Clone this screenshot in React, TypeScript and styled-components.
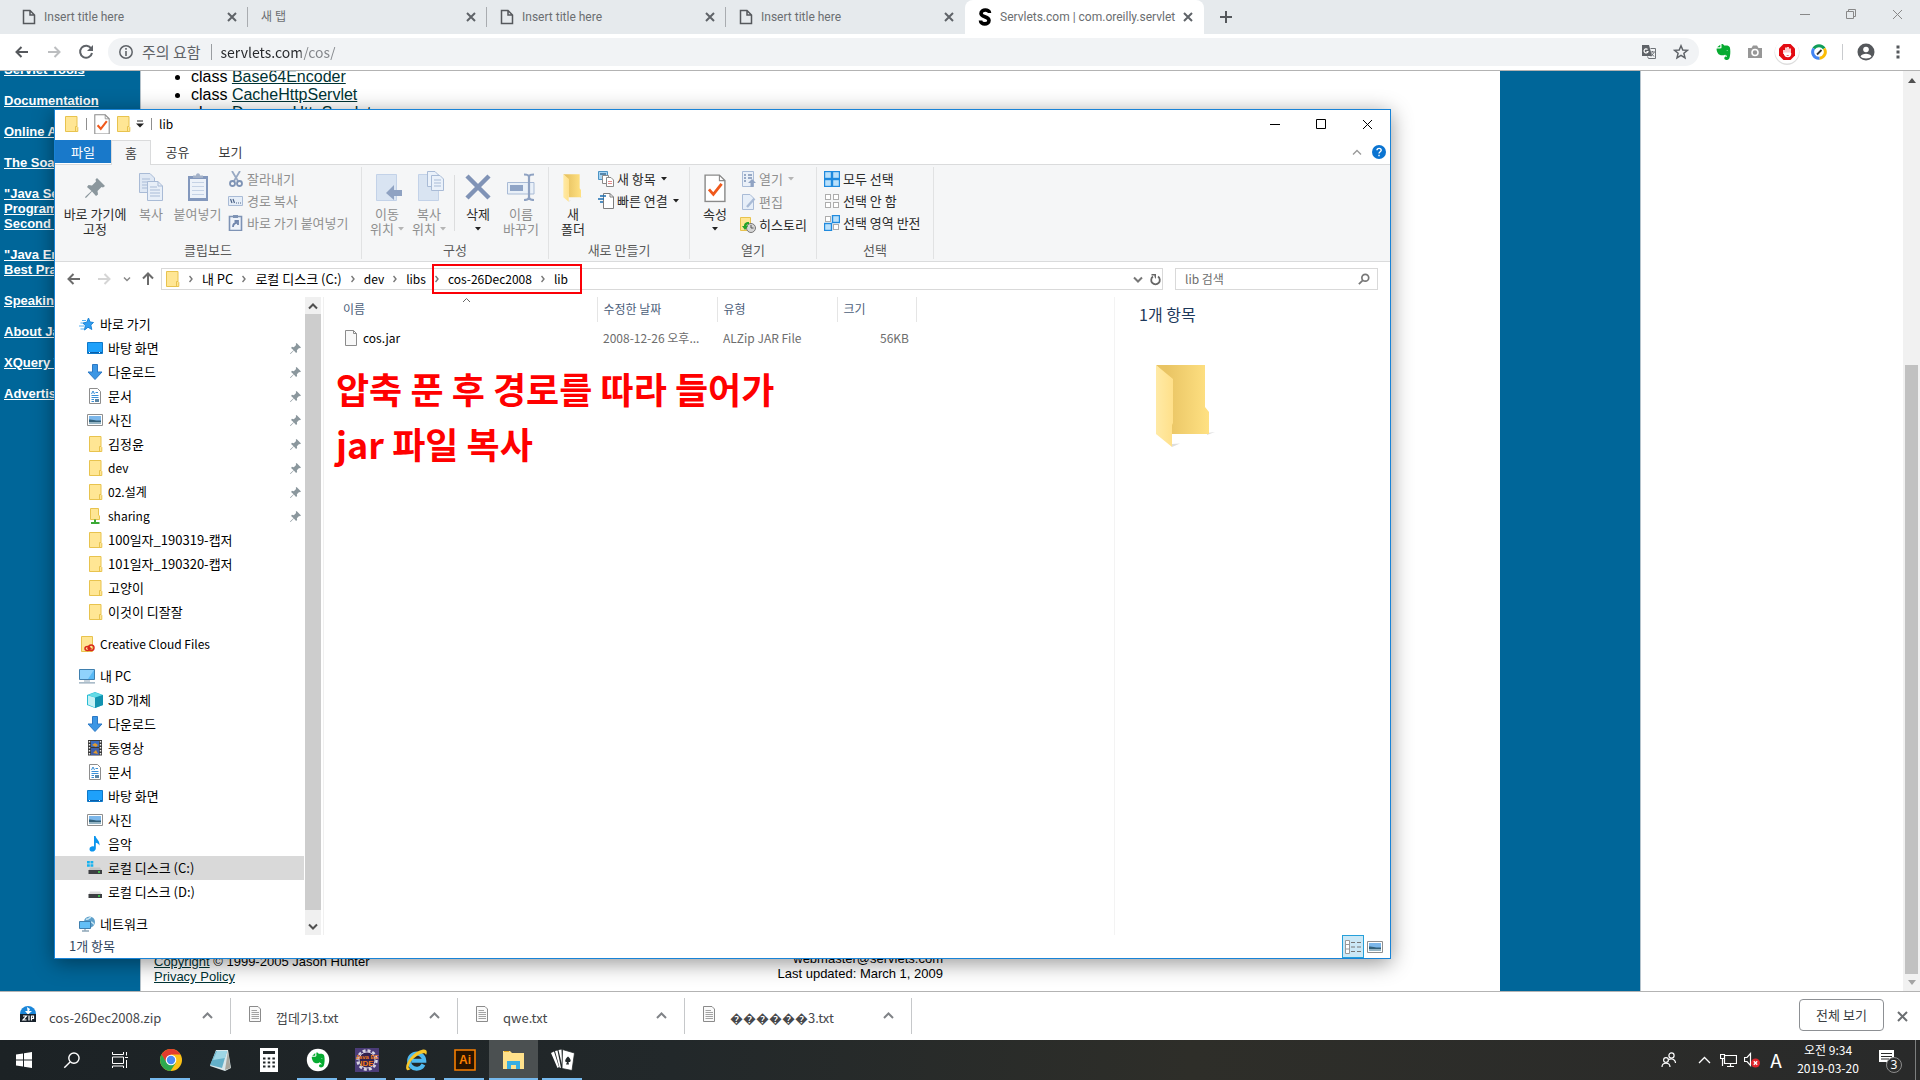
import React from 'react';
import styled, { createGlobalStyle, css } from 'styled-components';

const GlobalStyle = createGlobalStyle`
  *, *::before, *::after { box-sizing: border-box; }
  html, body, #root { height: 100%; }
  body {
    margin: 0;
    overflow: hidden;
    background: #fff;
    font-family: "Noto Sans CJK KR", "Noto Sans", sans-serif;
    font-size: 12px;
    line-height: 16px;
    color: #000;
  }
  button, input { font: inherit; color: inherit; padding: 0; border: 0; background: none; margin: 0; }
  button { cursor: default; }
  ul { list-style: none; margin: 0; padding: 0; }
  p { margin: 0; }
  svg { display: block; flex: none; }
`;

const Screen = styled.div`
  display: flex;
  flex-direction: column;
  height: 100vh;
`;

/* ---------- Browser chrome ---------- */

const TabStrip = styled.header`
  display: flex;
  height: 34px;
  background: #e6eaed;
`;
const TabItem = styled.div<{ $active?: boolean; $first?: boolean; $last?: boolean }>`
  position: relative;
  display: flex;
  align-items: center;
  gap: 8px;
  width: ${p => (p.$first ? 248 : 239)}px;
  padding: 0 11px 0 ${p => (p.$first ? 22 : 13)}px;
  color: #6b6e71;
  ${p => !p.$active && !p.$last && css`
    &::after {
      content: '';
      position: absolute;
      right: 0;
      top: 7px;
      width: 1px;
      height: 20px;
      background: #a9acb0;
    }
  `}
  ${p => p.$active && css`
    background: #fff;
    border-radius: 8px 8px 0 0;
  `}
`;
const TabTitle = styled.span`
  flex: 1;
  margin-right: -6px;
  overflow: hidden;
  font-family: Roboto, "Noto Sans CJK KR", sans-serif;
  white-space: nowrap;
`;
const PlainButton = styled.button`
  display: flex;
  align-items: center;
  justify-content: center;
`;
const NewTab = styled(PlainButton)`
  width: 28px;
  margin-left: 8px;
`;
const WindowControls = styled.div`
  display: flex;
  margin-left: auto;
  height: 28px;
  button { width: 46px; }
`;

const Toolbar = styled.div`
  display: flex;
  align-items: center;
  height: 37px;
  padding: 0 6px;
  border-bottom: 1px solid #b3b3b3;
`;
const ToolButton = styled(PlainButton)`
  width: 32px;
  height: 28px;
`;
const Omnibox = styled.div`
  display: flex;
  flex: 1;
  align-items: center;
  height: 28px;
  margin: 0 8px 0 6px;
  padding: 0 2px 0 10px;
  border-radius: 14px;
  background: #f1f3f5;
  color: #5f6368;
  font-size: 14px;
`;
const Warning = styled.span`
  margin: 0 9px 0 8px;
  padding-right: 10px;
  border-right: 1px solid #9a9da1;
  font-size: 15px;
`;
const Url = styled.input`
  flex: 1;
  outline: 0;
  color: #26282b;
  -webkit-text-fill-color: transparent;
  background: linear-gradient(90deg, #26282b 80px, #808387 80px);
  background-clip: text;
  -webkit-background-clip: text;
`;
const ToolDivider = styled.span`
  width: 1px;
  height: 16px;
  margin: 0 7px;
  background: #c9cbce;
`;

/* ---------- Web page ---------- */

const Page = styled.main`
  display: flex;
  flex: 1;
  min-height: 0;
  overflow: hidden;
  font-family: "Liberation Sans", Arial, sans-serif;
`;
const SiteNav = styled.nav`
  width: 141px;
  overflow: hidden;
  padding-left: 4px;
  border-right: 1px solid #b5c3cc;
  background: #006699;
  font-size: 13px;
  font-weight: bold;
  line-height: 15px;
  ul { display: grid; gap: 16px; margin-top: -9px; }
  a { color: #fff; }
`;
const Article = styled.div`
  display: flex;
  flex: 1;
  flex-direction: column;
  justify-content: space-between;
  overflow: hidden;
  a { color: #003333; }
`;
const ClassList = styled.ul`
  margin: -3px 0 0;
  padding-left: 50px;
  list-style: disc;
  font-size: 16px;
  line-height: 18px;
`;
const SiteFooter = styled.footer`
  display: flex;
  align-items: flex-end;
  justify-content: space-between;
  width: 802px;
  padding: 0 0 7px 13px;
  font-size: 13px;
  line-height: 15px;
`;
const FooterRight = styled.p`
  padding-bottom: 3px;
  text-align: right;
`;
const RightBand = styled.div`
  width: 141px;
  border-right: 1px solid #b5c3cc;
  background: #006699;
`;
const RightBlank = styled.div`
  width: 262px;
`;
const PageScroll = styled.div`
  display: flex;
  flex-direction: column;
  align-items: center;
  justify-content: space-between;
  width: 17px;
  padding: 7px 0 6px;
  background: #f1f1f1;
`;
const PageThumb = styled.div`
  flex: 1;
  width: 13px;
  margin: 282px 0 6px;
  background: #c1c1c1;
`;

/* ---------- Downloads ---------- */

const DownloadBar = styled.section`
  display: flex;
  align-items: center;
  height: 49px;
  padding: 0 12px 0 4px;
  border-top: 1px solid #b3b3b3;
  background: #fff;
  font-size: 13px;
  color: #46484b;
`;
const Download = styled.div`
  display: flex;
  align-items: center;
  gap: 13px;
  width: 227px;
  height: 36px;
  padding: 0 17px 0 16px;
  border-right: 1px solid #c6c8ca;
  & > svg { margin-bottom: 4px; }
`;
const DownloadName = styled.span`
  flex: 1;
  padding-top: 4px;
  white-space: nowrap;
`;
const ShowAll = styled.button`
  width: 85px;
  height: 32px;
  margin: 0 13px 2px auto;
  border: 1px solid #8d9094;
  border-radius: 4px;
  color: #3c4043;
`;

/* ---------- Taskbar ---------- */

const Taskbar = styled.footer`
  display: flex;
  height: 40px;
  background: linear-gradient(90deg, #1c2225 0%, #22282a 35%, #2e2e29 62%, #292a2a 100%);
  color: #fff;
`;
const TaskApps = styled.div`
  display: flex;
  padding-left: 2px;
`;
const TaskButton = styled(PlainButton)<{ $open?: boolean; $active?: boolean; $app?: boolean }>`
  position: relative;
  width: ${p => (p.$app ? 49 : 48)}px;
  ${p => p.$open && css`
    &::after {
      content: '';
      position: absolute;
      left: ${p.$active ? 0 : 4}px;
      right: ${p.$active ? 0 : 5}px;
      bottom: 0;
      height: 2px;
      background: #76b9ed;
    }
  `}
  ${p => p.$active && css`background: #4b5051;`}
`;
const Tray = styled.div`
  display: flex;
  align-items: center;
  margin-left: auto;
  button { width: 24px; height: 40px; }
`;
const TrayPeople = styled(PlainButton)`
  margin-right: 11px;
`;
const ImeMark = styled(PlainButton)`
  font-size: 19px;
`;
const Clock = styled.time`
  width: 80px;
  padding-bottom: 2px;
  line-height: 18px;
  text-align: center;
`;
const Notices = styled(PlainButton)`
  && { width: 44px; margin-right: 3px; }
`;
const DesktopEdge = styled.span`
  width: 5px;
  height: 40px;
  border-left: 1px solid #7c7e7e;
`;

/* ---------- Explorer window ---------- */

const Explorer = styled.section`
  position: absolute;
  inset: 109px 529px 121px 54px;
  display: flex;
  flex-direction: column;
  border: 1px solid #1883d7;
  background: #fff;
  box-shadow: 0 4px 20px rgba(0, 0, 0, 0.42);
`;
const TitleBar = styled.header`
  display: flex;
  align-items: center;
  height: 30px;
  padding: 0 0 2px 8px;
`;
const QuickBar = styled.div`
  display: flex;
  align-items: center;
  button { min-width: 8px; height: 20px; }
  button + button { margin-left: 5px; }
`;
const QuickDivider = styled.i`
  width: 1px;
  height: 12px;
  margin: 0 7px;
  background: #8f8f8f;
`;
const RibbonTabs = styled.div`
  display: flex;
  height: 24px;
  font-size: 13px;
`;
const RibbonTab = styled.button<{ $kind?: 'file' | 'active' }>`
  width: 53px;
  color: #3b3b3b;
  ${p => p.$kind === 'file' && css`
    width: 56px;
    height: 23px;
    background: #1979ca;
    color: #fff;
  `}
  ${p => p.$kind === 'active' && css`
    width: 40px;
    height: 25px;
    border: 1px solid #dadbdc;
    border-bottom: 0;
    background: #f5f6f7;
    z-index: 1;
  `}
`;
const RibbonHelp = styled.div`
  display: flex;
  align-items: center;
  gap: 10px;
  margin-left: auto;
  padding-right: 4px;
`;
const Ribbon = styled.div`
  display: flex;
  height: 98px;
  padding: 2px 0;
  border: solid #dadbdc;
  border-width: 1px 0;
  background: #f5f6f7;
  font-size: 13px;
`;
const Group = styled.div<{ $w: number }>`
  display: flex;
  flex-direction: column;
  justify-content: space-between;
  width: ${p => p.$w}px;
  padding-bottom: 1px;
  border-right: 1px solid #e1e2e3;
`;
const GroupBody = styled.div`
  display: flex;
  padding: 4px 0 0 4px;
`;
const GroupName = styled.span`
  text-align: center;
  color: #5a5a5a;
`;
const BigButton = styled.button<{ $w: number; $off?: boolean }>`
  display: flex;
  flex-direction: column;
  align-items: center;
  width: ${p => p.$w}px;
  color: ${p => (p.$off ? '#8f8f8f' : '#2b2b2b')};
  white-space: nowrap;
  line-height: 15px;
  & > svg { margin-bottom: 3px; }
`;
const BigLine = styled.span`
  display: flex;
  align-items: center;
  gap: 4px;
  height: 15px;
`;
const InnerDivider = styled.i`
  width: 1px;
  height: 56px;
  margin: 4px 2px 0 4px;
  background: #dcddde;
`;
const SmallButtons = styled.div<{ $left: number; $gap?: number }>`
  display: flex;
  flex-direction: column;
  gap: ${p => p.$gap ?? 6}px;
  margin-left: ${p => p.$left}px;
`;
const SmallButton = styled.button<{ $off?: boolean }>`
  display: flex;
  align-items: center;
  gap: 3px;
  height: 16px;
  color: ${p => (p.$off ? '#8f8f8f' : '#2b2b2b')};
  white-space: nowrap;
  svg:nth-child(2) { margin-left: 2px; }
`;

const AddressRow = styled.div`
  display: flex;
  align-items: center;
  height: 35px;
  padding: 0 12px 7px 4px;
`;
const NavButtons = styled.div`
  display: flex;
  padding-top: 6px;
`;
const NavButton = styled(PlainButton)<{ $w: number }>`
  width: ${p => p.$w}px;
  height: 20px;
`;
const AddressBox = styled.div`
  display: flex;
  flex: 1;
  height: 22px;
  margin: 6px 12px 0 0;
  border: 1px solid #d9d9d9;
`;
const Crumbs = styled.div`
  display: flex;
  flex: 1;
  align-items: center;
  padding-left: 2px;
`;
const MarkedCrumbs = styled.span`
  position: relative;
  display: flex;
  align-items: center;
  &::after {
    content: '';
    position: absolute;
    inset: -7px -14px -7px 6px;
    border: 2px solid #fb0007;
  }
`;
const Crumb = styled.button<{ $hangul?: boolean }>`
  display: flex;
  align-items: center;
  height: 16px;
  font-size: ${p => (p.$hangul ? 13 : 12)}px;
  white-space: nowrap;
  svg { margin: 0 9px; }
`;
const SearchBox = styled.label`
  display: flex;
  align-items: center;
  width: 203px;
  height: 22px;
  margin-top: 6px;
  padding: 0 7px 0 9px;
  border: 1px solid #d9d9d9;
  input { flex: 1; min-width: 0; outline: 0; }
  input::placeholder { color: #6d6d6d; opacity: 1; }
`;

const Body = styled.div`
  display: flex;
  flex: 1;
  min-height: 0;
`;
const NavPane = styled.nav`
  display: flex;
  width: 269px;
  border-right: 1px solid #f0f0f0;
`;
const Tree = styled.div`
  display: flex;
  flex: 1;
  flex-direction: column;
  gap: 8px;
  overflow: hidden;
  padding-top: 15px;
`;
const TreeItem = styled.li`
  display: flex;
`;
const TreeRow = styled.button<{ $root?: boolean; $selected?: boolean; $latin?: boolean }>`
  display: flex;
  flex: 1;
  align-items: center;
  gap: 5px;
  height: 24px;
  padding: 0 3px 0 ${p => (p.$root ? 24 : 32)}px;
  background: ${p => (p.$selected ? '#d9d9d9' : 'transparent')};
  font-size: ${p => (p.$latin ? 12 : 13)}px;
  text-align: left;
  white-space: nowrap;
  span { flex: 1; }
`;
const TreeScroll = styled.div`
  display: flex;
  flex-direction: column;
  align-items: center;
  width: 16px;
  margin: 0 2px 0 1px;
  padding: 6px 0 5px;
  background: #f0f0f0;
`;
const TreeThumb = styled.div`
  flex: 1;
  width: 100%;
  margin: 4px 0 13px;
  background: #cdcdcd;
`;

const FileList = styled.div`
  position: relative;
  flex: 1;
`;
const FileTable = styled.table`
  table-layout: fixed;
  width: 592px;
  border-collapse: collapse;
  color: #6d6d6d;
  th {
    position: relative;
    height: 25px;
    padding: 0 0 2px 6px;
    border-right: 1px solid #e5e5e5;
    font-weight: normal;
    text-align: left;
    color: #4c607a;
  }
  th svg { position: absolute; top: 0; left: 138px; }
  td { height: 32px; padding: 0 0 0 6px; white-space: nowrap; }
  th:first-child, td:first-child { padding-left: 19px; }
  td:last-child { padding: 0 7px 0 0; text-align: right; }
`;
const NameCol = styled.col`width: 273px;`;
const DateCol = styled.col`width: 120px;`;
const TypeCol = styled.col`width: 120px;`;
const SizeCol = styled.col`width: 79px;`;
const FileName = styled.span`
  display: flex;
  align-items: center;
  gap: 4px;
  color: #000;
`;
const Note = styled.p`
  position: absolute;
  left: 12px;
  top: 64px;
  font-size: 36px;
  font-weight: bold;
  line-height: 55px;
  color: #ff0000;
  white-space: nowrap;
`;
const Preview = styled.aside`
  width: 276px;
  padding: 7px 0 0 24px;
  border-left: 1px solid #f3f3f3;
  h2 {
    margin: 0 0 40px;
    font-size: 16px;
    font-weight: normal;
    line-height: 20px;
    color: #1e395b;
  }
  svg { margin-left: 16px; }
`;
const StatusBar = styled.footer`
  display: flex;
  justify-content: space-between;
  height: 23px;
  padding: 0 7px 0 14px;
  font-size: 13px;
  line-height: 22px;
  color: #33475f;
`;
const ViewSwitch = styled.div`
  display: flex;
  align-items: center;
  gap: 3px;
`;
const ViewButton = styled(PlainButton)<{ $on?: boolean }>`
  height: 23px;
  ${p => p.$on && css`
    width: 22px;
    border: 1px solid #26a0da;
    background: #cbe8f6;
  `}
`;

/* ---------- Icons ---------- */

type SvgProps = { w?: number; h?: number; box?: string; children: React.ReactNode };
const Svg = ({ w = 16, h = w, box, children }: SvgProps) => (
  <svg width={w} height={h} viewBox={box ?? `0 0 ${w} ${h}`} fill="none" aria-hidden="true">{children}</svg>
);

const Cross = ({ s = 8, c = '#5f6368', t = 2 }) => (
  <Svg w={s + 2}><path d={`M1 1L${s + 1} ${s + 1}M${s + 1} 1L1 ${s + 1}`} stroke={c} strokeWidth={t} /></Svg>
);
const Chevron = ({ dir, w = 8, c = '#777', t = 2 }: { dir: 'up' | 'down' | 'right'; w?: number; c?: string; t?: number }) => {
  const h = w / 2;
  if (dir === 'right') return <Svg w={4} h={8}><path d="M0.5 1L3 4L0.5 7" stroke={c} strokeWidth={1.4} /></Svg>;
  return (
    <Svg w={w + 2} h={h + 3}>
      <path d={dir === 'up' ? `M1 ${h + 1.5}L${h + 1} 1.5L${w + 1} ${h + 1.5}` : `M1 1.5L${h + 1} ${h + 1.5}L${w + 1} 1.5`} stroke={c} strokeWidth={t} />
    </Svg>
  );
};
const Caret = ({ c = '#222' }) => <Svg w={6} h={4}><path d="M0 0H6L3 3.5Z" fill={c} /></Svg>;
const Blank = () => <Svg w={14} h={16}><path d="M1.5 1.5H8L12.5 6V14.5H1.5ZM8 1.5V6H12.5" stroke="#55585c" strokeWidth={1.5} /></Svg>;
const Folder = () => (
  <Svg w={16}>
    <path d="M2.5 .5H14V10.5L14.8 11.5V15.5H2.5Z" fill="#ffe694" stroke="#e8c34e" />
    <path d="M12.5 15.5V10.5H14" stroke="#e8c34e" />
  </Svg>
);
const Share = () => (
  <Svg w={16}>
    <path d="M3.5 .5H11.5V7L12.5 8V11.5H3.5Z" fill="#ffe694" stroke="#e8c34e" />
    <path d="M8 11.5V15M4 15H12.5" stroke="#3aa935" strokeWidth={2} />
  </Svg>
);
const Star = () => (
  <Svg w={16}>
    <path d="M9.5 2L11 6L14.5 6.5L11.8 9L12.8 13.5L9 11.2L5.5 14L6.3 9.6L4 7L7.8 6.2Z" fill="#2f9df0" stroke="#1c84d6" />
    <path d="M3 4.5H7M1.5 7H4M0 10H5M1.5 13H5" stroke="#56b2f5" strokeWidth={1.2} />
  </Svg>
);
const DesktopIcon = () => (
  <Svg w={16}><path d="M.5 2.5H15.5V13.5H.5Z" fill="#1ea1fb" stroke="#0d78c9" /><path d="M1 12.5H15" stroke="#0b5ea8" /><path d="M2 12.5H3M12 12.5H13" stroke="#fff" /></Svg>
);
const DownIcon = () => <Svg w={16}><path d="M5.5 .5H10.5V8H15L8 15.5L1 8H5.5Z" fill="#3c96e4" stroke="#2b78c5" /></Svg>;
const DocIcon = () => (
  <Svg w={16}>
    <path d="M2.5 .5H10.5L13.5 3.5V15.5H2.5Z" fill="#fff" stroke="#8d8d8d" />
    <path d="M4.5 6L6 3L7.5 6M8.5 4.5H11M4.5 7.5H11.5M4.5 9.5H11.5M4.5 11.5H7M4.5 13.5H7" stroke="#3a8fd6" />
    <path d="M8 11H12V14H8Z" fill="#5b86a6" />
  </Svg>
);
const PhotoIcon = () => (
  <Svg w={16}>
    <path d="M.5 2.5H15.5V13.5H.5Z" fill="#fff" stroke="#8f8f8f" />
    <path d="M2 4H14V12H2Z" fill="#7cb7ea" />
    <path d="M2 7.5C5 7 8 9 14 8.5V12H2Z" fill="#33617a" />
    <path d="M2 10H14V12H2Z" fill="#94b4c4" />
  </Svg>
);
const PcIcon = () => (
  <Svg w={16}>
    <path d="M.5 1.5H15.5V11.5H.5Z" fill="#59b9f5" stroke="#3f7fae" />
    <path d="M1 2H15L9 11H1Z" fill="#8fd2fb" />
    <path d="M5 13H11M0 14.8H16" stroke="#8fa6b8" strokeWidth={1.2} />
  </Svg>
);
const CubeIcon = () => (
  <Svg w={16}>
    <path d="M0 3L8 0L16 3V13L8 16L0 13Z" fill="#28bcd4" />
    <path d="M1 3.5L8 5.5V15.5L1 12.5Z" fill="#c5f1f5" />
    <path d="M8 5.5L16 3V13L8 16Z" fill="#1393b0" />
    <path d="M1 3L8 .5L15 3L8 5.5Z" fill="#63dbe6" />
  </Svg>
);
const FilmIcon = () => (
  <Svg w={16}>
    <path d="M1 0H15V15.5H1Z" fill="#3a3a3a" />
    <path d="M4 1H12V7H4Z" fill="#3c6cc0" /><path d="M4 8H12V15H4Z" fill="#3f5fa8" />
    <path d="M5 5L8 3L11 5L9 7ZM6 13L9 10L11 14Z" fill="#e39b2d" />
    <path d="M2.5 1V15M13.5 1V15" stroke="#eee" strokeWidth={1.4} strokeDasharray="1.5 1.5" />
  </Svg>
);
const MusicIcon = () => <Svg w={16}><path d="M7 0H8.5C9 3 13 4.5 12.5 9.5C11.5 7.5 10 7 8.8 6.8V12.5C8.8 16 2.5 17 2.5 13.2C2.5 10.5 5.5 10 7 10.6Z" fill="#0b95ee" /></Svg>;
const DiskIcon = ({ win }: { win?: boolean }) => (
  <Svg w={16}>
    {win && <path d="M0 1H2.8V3.5H0ZM3.5 1H6.3V3.5H3.5ZM0 4.2H2.8V6.8H0ZM3.5 4.2H6.3V6.8H3.5Z" fill="#17b2ef" />}
    <path d="M3 7.5H13L15 11H1.5Z" fill={win ? '#c4c4c4' : '#dedede'} />
    <path d="M1.5 10H15V14H1.5Z" fill="#3d3f42" />
    <path d="M11 12H13" stroke="#3fe04c" strokeWidth={1.5} />
  </Svg>
);
const NetIcon = () => (
  <Svg w={16}>
    <circle cx={10.5} cy={6} r={5.5} fill="#5c9fca" />
    <path d="M7 3C9 4 10 2 12 1M12 6C14 6 14 8 15 8" stroke="#c5e4f2" strokeWidth={1.5} />
    <path d="M.5 5.5H11.5V12.5H.5Z" fill="#63bff6" stroke="#3f7fae" />
    <path d="M3 15H10M6 13V15" stroke="#8fa6b8" strokeWidth={1.3} />
  </Svg>
);
const CloudIcon = () => (
  <Svg w={16}>
    <path d="M2.5 .5H13.5V15.5H2.5Z" fill="#ffe694" stroke="#e8c34e" />
    <ellipse cx={8.5} cy={12.5} rx={2.5} ry={2} stroke="#d92a1c" strokeWidth={1.5} />
    <ellipse cx={12.2} cy={11.8} rx={2.8} ry={2.8} stroke="#d92a1c" strokeWidth={1.5} />
    <path d="M8 12L13 13" stroke="#d92a1c" />
  </Svg>
);
const pinPath = 'M12 0L20 8L18 9.5L16.5 9L12.5 13L13 16.5L11 18L7 13.5L1.5 19.5L0 20L.5 18.5L6.5 13L2 9L3.5 7L7 7.5L11 3.5L10.5 1.5Z';
const Pin = () => <Svg w={11} box="0 0 20 20"><path d={pinPath} fill="#8b979d" /></Svg>;
const Props = ({ s = 16 }) => (
  <Svg w={s} h={s * 1.3} box="0 0 20 26">
    <path d="M1 1H14L19 6V25H1Z" fill="#fff" stroke="#8a8a8a" strokeWidth={1.3} />
    <path d="M14 1V6H19" stroke="#8a8a8a" />
    <path d="M4.5 14L8.5 18.5L16 9" stroke="#f0591c" strokeWidth={2.6} />
  </Svg>
);
const soft = '#a9bbd6';
const softFill = '#dfe8f4';
const PaperStack = () => (
  <Svg w={26} h={28}>
    <path d="M1.5 .5H12L16.5 5V19.5H1.5Z" fill={softFill} stroke={soft} />
    <path d="M4 6H12M4 9H13M4 12H13M4 15H10" stroke={soft} />
    <path d="M9.5 8.5H20L24.5 13V27.5H9.5Z" fill="#e8eff8" stroke={soft} />
    <path d="M20 8.5V13H24.5M12 14H19M12 17H22M12 20H22M12 23H22" stroke={soft} />
  </Svg>
);
const PasteIcon = () => (
  <Svg w={22} h={28}>
    <path d="M1 3H21V28H1Z" fill="#8398bd" />
    <path d="M3 6H19V25H3Z" fill="#edf2f9" />
    <path d="M6 5V2.5H9C9-.5 13-.5 13 2.5H16V5Z" fill="#a3b1c8" />
    <path d="M5 9.5H17M5 13.5H17M5 17.5H17M5 21.5H17" stroke="#c5d2e5" />
  </Svg>
);
const CutIcon = () => (
  <Svg w={16}>
    <path d="M4 0L10 10M12 0L6 10" stroke="#98a9c3" strokeWidth={1.8} />
    <circle cx={4.5} cy={12.5} r={2.5} stroke="#7e93b5" strokeWidth={1.8} /><circle cx={11.5} cy={12.5} r={2.5} stroke="#7e93b5" strokeWidth={1.8} />
  </Svg>
);
const PathIcon = () => (
  <Svg w={16}><path d="M.5 3.5H14.5V12.5H.5Z" fill="#e6eef8" stroke={soft} /><path d="M2.5 6L4 10M5 6L6.5 10M8 10H9M10 10H11M12 10H13" stroke="#4d6488" strokeWidth={1.2} /></Svg>
);
const PasteLink = () => (
  <Svg w={16}>
    <path d="M1.5 1.5H13.5V15.5H1.5Z" fill="#eef3fa" stroke="#7e93b5" strokeWidth={1.6} />
    <path d="M5 0H10V3H5Z" fill="#7e93b5" />
    <path d="M5 12C5 9 6 8 9 7.5M6.5 6H10V10" stroke="#7187ad" strokeWidth={1.8} />
  </Svg>
);
const MoveIcon = ({ copy }: { copy?: boolean }) => (
  <Svg w={32} h={30} box="-4 0 32 30">
    <path d="M1.5 3.5H21.5V29.5H1.5Z" fill="#d9e4f2" stroke="#c3d2e8" />
    {copy ? (
      <>
        <path d="M10.5 .5H18L21.5 4V15.5H10.5Z" fill="#eaf1fa" stroke={soft} />
        <path d="M14.5 4.5H23L26.5 8V19.5H14.5Z" fill="#eaf1fa" stroke={soft} />
        <path d="M17 9H24M17 12H24M17 15H24" stroke={soft} />
      </>
    ) : <path d="M11 22L19 14V19H27V25H19V29Z" fill="#8fa2c2" />}
  </Svg>
);
const DeleteIcon = () => <Svg w={28} h={30}><path d="M3 5L25 27M25 5L3 27" stroke="#8093b6" strokeWidth={4.5} /></Svg>;
const RenameIcon = () => (
  <Svg w={30} h={30}>
    <path d="M1.5 11.5H28V23H1.5Z" fill="#e9f0f8" stroke={soft} />
    <path d="M4 14H17V20H4Z" fill="#8fa4c6" />
    <path d="M23 5V29M18 3.5C21 3.5 23 4 23 6C23 4 25 3.5 28 3.5M18 29C21 29 23 28.5 23 26C23 28.5 25 29 28 29" stroke="#8fa2c2" strokeWidth={2.2} />
  </Svg>
);
const OpenFolder = ({ w = 60, h = 84 }) => (
  <Svg w={w} h={h} box="0 0 60 84">
    <defs>
      <linearGradient id="fb"><stop offset=".2" stopColor="#e9c463" /><stop offset="1" stopColor="#ffe183" /></linearGradient>
      <linearGradient id="ff"><stop stopColor="#ffeaa6" /><stop offset="1" stopColor="#ffe08a" /></linearGradient>
    </defs>
    <path d="M17 80L25 79.5L17 83Z M52 69L60 68L52 71Z" fill="#dedede" />
    <path d="M1 1H50V43L54 48V70H17V20Z" fill="url(#fb)" />
    <path d="M1 1L18 15V59L17 61V83L1 70Z" fill="url(#ff)" />
  </Svg>
);
const NewItemIcon = () => (
  <Svg w={16}>
    <path d="M.5 .5H9.5V8.5H.5Z" fill="#a8d5f3" stroke="#4b93c4" /><path d="M2 3H8" stroke="#3b6d94" strokeWidth={1.5} />
    <path d="M4.5 4.5H10.5V12.5H4.5Z" fill="#fff" stroke="#8a8a8a" />
    <path d="M8.5 6.5H13L15.5 9V15.5H8.5Z" fill="#fff" stroke="#8a8a8a" /><path d="M10 10.5H14M10 12.5H14" stroke="#e08b8b" />
  </Svg>
);
const QuickLinkIcon = () => (
  <Svg w={16}>
    <path d="M5.5 .5H12L15.5 4V15.5H5.5Z" fill="#fff" stroke="#7d7d7d" /><path d="M12 .5V4H15.5" stroke="#7d7d7d" />
    <path d="M2 3H8M0 6H6M2 9H5" stroke="#1b6fb3" strokeWidth={1.3} />
  </Svg>
);
const OpenIcon = () => (
  <Svg w={16}>
    <path d="M2.5 .5H13.5V15.5H2.5Z" fill="#eaf0f8" stroke={soft} /><path d="M4 4H6M4 7H6M4 10H6M8 4H12M8 7H12" stroke="#7e93b5" strokeWidth={1.5} />
    <path d="M12 8L16 12H13.5V16H10.5V12H8Z" fill="#90a3c3" />
  </Svg>
);
const EditIcon = () => (
  <Svg w={16}><path d="M2.5 .5H10L13.5 4V15.5H2.5Z" fill="#e6eef8" stroke={soft} /><path d="M14.5 4.5L7 13" stroke="#a9bbd6" strokeWidth={2.4} /></Svg>
);
const HistoryIcon = () => (
  <Svg w={16}>
    <path d="M.5 .5H10.5V13.5H.5Z" fill="#ffe694" stroke="#e8c34e" /><circle cx={11} cy={11} r={4.5} fill="#d6d6d6" stroke="#777" />
    <path d="M11 8V11H13.5" stroke="#555" /><path d="M9 5C5 5 4 7 4 9H2L5 13L8 9H6.5C6.5 8 7 7 9 7Z" fill="#23a32c" />
  </Svg>
);
const SelectIcon = ({ on }: { on: number[] }) => (
  <Svg w={16}>
    {[[0, 0], [1, 0], [0, 1], [1, 1]].map(([x, y], i) => {
      const lit = on.includes(i);
      return <rect key={i} x={x * 8 + (lit ? 0.5 : 1.5)} y={y * 8 + (lit ? 0.5 : 1.5)} width={lit ? 7 : 5} height={lit ? 7 : 5} fill={lit ? '#b9e0fb' : '#fff'} stroke={lit ? '#1f8ade' : '#adadad'} strokeWidth={lit ? 1.4 : 1} />;
    })}
  </Svg>
);
const Arrow = ({ d, c = '#6b6b6b' }: { d: 'left' | 'right' | 'up'; c?: string }) => (
  <Svg w={14}>
    <path d={d === 'left' ? 'M13 7H2M6.5 2L1.5 7L6.5 12' : d === 'right' ? 'M1 7H12M7.5 2L12.5 7L7.5 12' : 'M7 13V2M2 6.5L7 1.5L12 6.5'} stroke={c} strokeWidth={2} />
  </Svg>
);
const Reload = ({ s = 16, c = '#5f6368' }) => (
  <Svg w={s} box="0 0 16 16"><path d="M13.2 4.5A6 6 0 1 0 14 9" stroke={c} strokeWidth={2} /><path d="M15 1V7H9Z" fill={c} /></Svg>
);
const Refresh = () => (
  <Svg w={11} h={13}><path d="M3 3.5A4.3 4.3 0 1 0 8 3.5" stroke="#666" strokeWidth={1.8} /><path d="M1.5 1H6V6L4.5 4V2.5H1.5Z" fill="#666" /></Svg>
);
const Magnifier = ({ s = 14, c = '#777', t = 2 }) => (
  <Svg w={s} box="0 0 14 14"><circle cx={8.5} cy={5.5} r={4} stroke={c} strokeWidth={t} /><path d="M5.5 8.5L1 13" stroke={c} strokeWidth={t} /></Svg>
);
const elephant = 'M6.500 0C8.500 0 9.500 .8 9.800 2C13 1.500 16.500 2 17 4.500C18 8.500 17.500 15 16.200 18C15 20.500 10 20.500 10 17.800C10 15.800 12.500 15 13.500 16.500L13 14.500C12 14.500 11.300 14 11 13C9 15 3.500 14.500 2 11.500C.8 9.500 0 7 .5 5.500H5C6 5.500 6.500 5 6.500 4ZM5 .8V4.200H1ZM12.500 8.500C13 7.300 14.500 7.500 14.800 9C14 8.500 13.300 8.300 12.500 8.500Z';
const TextFile = () => (
  <Svg w={16}><path d="M2.5 .5H11L13.5 3V15.5H2.5Z" fill="#fafafa" stroke="#8b8b8b" /><path d="M4.5 4.5H10M4.5 6.5H12M4.5 8.5H12M4.5 10.5H12M4.5 12.5H12" stroke="#a3a3a3" /></Svg>
);
const ZipFile = () => (
  <Svg w={16}>
    <path d="M0 8A8 8 0 0 1 16 8Z" fill="#1a86d9" /><path d="M7 1L10 3L9 5H12L8 8.5L5 5L7.5 5Z" fill="#fff" />
    <path d="M0 8H16V16H0Z" fill="#16202a" /><path d="M3 10H6.5L3 14H6.5M9 9.5V14.5M11.5 14.5V10H13.5V12.5H11.5" stroke="#fff" strokeWidth={1.2} />
  </Svg>
);

/* ---------- Data ---------- */

const siteLinks: string[][] = [
  ['Servlet Tools'], ['Documentation'], ['Online Articles'], ['The Soapbox'],
  ['"Java Servlet', 'Programming,', 'Second Edition"'], ['"Java Enterprise', 'Best Practices"'],
  ['Speaking & Slides'], ['About Jason'], ['XQuery Work'], ['Advertising'],
];
type Leaf = { icon: React.ReactNode; text: string; root?: boolean; pin?: boolean; sel?: boolean; latin?: boolean };
const tree: Leaf[][] = [
  [
    { icon: <Star />, text: '바로 가기', root: true },
    { icon: <DesktopIcon />, text: '바탕 화면', pin: true },
    { icon: <DownIcon />, text: '다운로드', pin: true },
    { icon: <DocIcon />, text: '문서', pin: true },
    { icon: <PhotoIcon />, text: '사진', pin: true },
    { icon: <Folder />, text: '김정윤', pin: true },
    { icon: <Folder />, text: 'dev', pin: true, latin: true },
    { icon: <Folder />, text: '02.설계', pin: true, latin: true },
    { icon: <Share />, text: 'sharing', pin: true, latin: true },
    { icon: <Folder />, text: '100일자_190319-캡저' },
    { icon: <Folder />, text: '101일자_190320-캡저' },
    { icon: <Folder />, text: '고양이' },
    { icon: <Folder />, text: '이것이 디잘잘' },
  ],
  [{ icon: <CloudIcon />, text: 'Creative Cloud Files', root: true, latin: true }],
  [
    { icon: <PcIcon />, text: '내 PC', root: true },
    { icon: <CubeIcon />, text: '3D 개체' },
    { icon: <DownIcon />, text: '다운로드' },
    { icon: <FilmIcon />, text: '동영상' },
    { icon: <DocIcon />, text: '문서' },
    { icon: <DesktopIcon />, text: '바탕 화면' },
    { icon: <PhotoIcon />, text: '사진' },
    { icon: <MusicIcon />, text: '음악' },
    { icon: <DiskIcon win />, text: '로컬 디스크 (C:)', sel: true },
    { icon: <DiskIcon />, text: '로컬 디스크 (D:)' },
  ],
  [{ icon: <NetIcon />, text: '네트워크', root: true }],
];

/* ---------- Sections ---------- */

const pageTabs = ['Insert title here', '새 탭', 'Insert title here', 'Insert title here'];

const Browser = () => (
  <>
    <TabStrip>
      {pageTabs.map((t, i) => (
        <TabItem key={i} $first={i === 0} $last={i === 3}>
          {t !== '새 탭' && <Blank />}
          <TabTitle>{t}</TabTitle>
          <PlainButton aria-label="탭 닫기"><Cross /></PlainButton>
        </TabItem>
      ))}
      <TabItem $active>
        <Svg w={14} h={18}><path d="M11.5 5C11.5 1 3 1 3 5.5C3 9.5 11 8 11 12.5C11 17 2.5 17 2.5 12.5" stroke="#000" strokeWidth={3.6} /></Svg>
        <TabTitle>Servlets.com | com.oreilly.servlet</TabTitle>
        <PlainButton aria-label="탭 닫기"><Cross /></PlainButton>
      </TabItem>
      <NewTab aria-label="새 탭"><Svg w={12}><path d="M6 0V12M0 6H12" stroke="#55585c" strokeWidth={2} /></Svg></NewTab>
      <WindowControls>
        <PlainButton aria-label="최소화"><Svg w={10}><path d="M0 5.5H10" stroke="#888" /></Svg></PlainButton>
        <PlainButton aria-label="이전 크기로"><Svg w={10}><path d="M.5 2.5H7.5V9.5H.5ZM2.5 2V.5H9.5V7.5H8" stroke="#888" /></Svg></PlainButton>
        <PlainButton aria-label="닫기"><Cross s={9} c="#888" t={1} /></PlainButton>
      </WindowControls>
    </TabStrip>
    <Toolbar>
      <ToolButton aria-label="뒤로"><Arrow d="left" c="#55585c" /></ToolButton>
      <ToolButton aria-label="앞으로"><Arrow d="right" c="#bcbec0" /></ToolButton>
      <ToolButton aria-label="새로고침"><Reload /></ToolButton>
      <Omnibox>
        <Svg w={16}><circle cx={8} cy={8} r={6.2} stroke="#5f6368" strokeWidth={1.5} /><path d="M8 7V12M8 4V5.7" stroke="#5f6368" strokeWidth={1.6} /></Svg>
        <Warning>주의 요함</Warning>
        <Url aria-label="주소" defaultValue="servlets.com/cos/" />
        <ToolButton aria-label="번역">
          <Svg w={16}><path d="M1 1H8L11 12H1Z" fill="#5f6368" /><path d="M9.5 4.5H14.5V14.5H7.5L6.5 12.5M9 8H14M11.5 7V8M10 12.5L13 8.5M10.5 9.5L13 12.5" stroke="#6f7378" /><path d="M6.5 5.5A2 2 0 1 0 7 7.5H5.5" stroke="#fff" strokeWidth={1.2} /></Svg>
        </ToolButton>
        <ToolButton aria-label="북마크">
          <Svg w={16}><path d="M8 1.8L9.8 6L14.4 6.3L10.9 9.3L12 13.9L8 11.4L4 13.9L5.1 9.3L1.6 6.3L6.2 6Z" stroke="#5f6368" strokeWidth={1.5} /></Svg>
        </ToolButton>
      </Omnibox>
      <ToolButton aria-label="Evernote"><Svg w={15} h={16} box="0 0 18 20"><path d={elephant} fill="#07ab31" fillRule="evenodd" /></Svg></ToolButton>
      <ToolButton aria-label="캡처"><Svg w={16}><path d="M1 4H4.5L6 1.5H10L11.5 4H15V14H1Z" fill="#979797" /><circle cx={8} cy={8.5} r={3} stroke="#fff" strokeWidth={1.6} /></Svg></ToolButton>
      <ToolButton aria-label="AdBlock">
        <Svg w={26} h={28}>
          <circle cx={13} cy={14.5} r={12.5} fill="#dedede" /><circle cx={13} cy={13.5} r={12} fill="#fff" />
          <path d="M9.5 6H16.5L21 10.5V17.5L16.5 22H9.5L5 17.5V10.5Z" fill="#e30b12" />
          <path d="M10 12V16M12 9.5V15M14 9V15M16 10.5V16M11 16C11 18 12 18.5 14 18.5C16 18.5 16.5 17 16.5 15" stroke="#fff" strokeWidth={1.6} /><path d="M10 14.5H16.5V17H10Z" fill="#fff" />
        </Svg>
      </ToolButton>
      <ToolButton aria-label="확장 프로그램">
        <Svg w={16}>
          <path d="M2.8 4.5A6.2 6.2 0 0 1 13.2 4.5" stroke="#0f9d58" strokeWidth={3} /><path d="M13.2 4.5A6.2 6.2 0 0 1 8.5 14.2" stroke="#fbbc05" strokeWidth={3} /><path d="M8.5 14.2A6.2 6.2 0 0 1 2.8 4.5" stroke="#4285f4" strokeWidth={3} />
          <path d="M6 10.5L10.5 6" stroke="#333" strokeWidth={1.8} />
        </Svg>
      </ToolButton>
      <ToolDivider />
      <ToolButton aria-label="프로필"><Svg w={18}><circle cx={9} cy={9} r={8.5} fill="#55585c" /><circle cx={9} cy={6.5} r={2.8} fill="#fff" /><path d="M3.5 13.5C5 9.8 13 9.8 14.5 13.5C13 16 5 16 3.5 13.5Z" fill="#fff" /></Svg></ToolButton>
      <ToolButton aria-label="메뉴"><Svg w={4} h={14}><path d="M.5 .5H3.5V3.5H.5ZM.5 5.5H3.5V8.5H.5ZM.5 10.5H3.5V13.5H.5Z" fill="#55585c" /></Svg></ToolButton>
    </Toolbar>
  </>
);

const WebPage = () => (
  <Page>
    <SiteNav>
      <ul>
        {siteLinks.map(lines => (
          <li key={lines[0]}><a href="#nav">{lines.map((l, i) => <React.Fragment key={l}>{i > 0 && <br />}{l}</React.Fragment>)}</a></li>
        ))}
      </ul>
    </SiteNav>
    <Article>
      <ClassList>
        {['Base64Encoder', 'CacheHttpServlet', 'DaemonHttpServlet'].map(c => <li key={c}>class <a href="#class">{c}</a></li>)}
      </ClassList>
      <SiteFooter>
        <p><a href="#copyright">Copyright</a> © 1999-2005 Jason Hunter<br /><a href="#privacy">Privacy Policy</a></p>
        <FooterRight>webmaster@servlets.com<br />Last updated: March 1, 2009</FooterRight>
      </SiteFooter>
    </Article>
    <RightBand />
    <RightBlank />
    <PageScroll>
      <Svg w={8} h={5}><path d="M4 0L8 5H0Z" fill="#505050" /></Svg>
      <PageThumb />
      <Svg w={8} h={5}><path d="M0 0H8L4 5Z" fill="#a3a3a3" /></Svg>
    </PageScroll>
  </Page>
);

const Big = ({ w, off, icon, lines, caret }: { w: number; off?: boolean; icon: React.ReactNode; lines: string[]; caret?: boolean }) => (
  <BigButton $w={w} $off={off}>
    {icon}
    {lines.map((l, i) => (
      <BigLine key={i}>{l}{caret && i === lines.length - 1 && <Caret c={off ? '#b5b5b5' : '#222'} />}</BigLine>
    ))}
  </BigButton>
);
const Small = ({ off, icon, text, caret }: { off?: boolean; icon: React.ReactNode; text: string; caret?: boolean }) => (
  <SmallButton $off={off}>{icon}{text}{caret && <Caret c={off ? '#b5b5b5' : '#222'} />}</SmallButton>
);
const Tall = ({ w, h, children }: { w: number; h: number; children: React.ReactNode }) => (
  <svg width={w} height={32} viewBox={`0 ${h - 32} ${w} 32`} overflow="visible" aria-hidden="true">{children}</svg>
);

const ExplorerWindow = () => (
  <Explorer>
    <TitleBar>
      <QuickBar>
        <Folder />
        <QuickDivider />
        <PlainButton aria-label="속성"><Props s={16} /></PlainButton>
        <PlainButton aria-label="새 폴더"><Folder /></PlainButton>
        <PlainButton aria-label="빠른 실행 사용자 지정"><Svg w={8} h={8}><path d="M1 1H7" stroke="#222" /><path d="M0 3.5H8L4 7.5Z" fill="#222" /></Svg></PlainButton>
        <QuickDivider />
      </QuickBar>
      lib
      <WindowControls>
        <PlainButton aria-label="최소화"><Svg w={10}><path d="M0 5.5H10" stroke="#000" /></Svg></PlainButton>
        <PlainButton aria-label="최대화"><Svg w={10}><path d="M.5 .5H9.5V9.5H.5Z" stroke="#000" /></Svg></PlainButton>
        <PlainButton aria-label="닫기"><Cross s={9} c="#000" t={1} /></PlainButton>
      </WindowControls>
    </TitleBar>
    <RibbonTabs>
      <RibbonTab $kind="file">파일</RibbonTab>
      <RibbonTab $kind="active">홈</RibbonTab>
      <RibbonTab>공유</RibbonTab>
      <RibbonTab>보기</RibbonTab>
      <RibbonHelp>
        <PlainButton aria-label="리본 최소화"><Chevron dir="up" c="#999" t={1.3} /></PlainButton>
        <PlainButton aria-label="도움말"><Svg w={14}><circle cx={7} cy={7} r={7} fill="#0b74d1" /><path d="M5 5.2C5 2.8 9.2 2.8 9.2 5.2C9.2 6.7 7 6.8 7 8.5M7 9.8V11.3" stroke="#fff" strokeWidth={1.4} /></Svg></PlainButton>
      </RibbonHelp>
    </RibbonTabs>
    <Ribbon>
      <Group $w={307}>
        <GroupBody>
          <Big w={72} icon={<Tall w={20} h={26}><g transform="translate(0 1)"><path d={pinPath} fill="#8b979d" /></g></Tall>} lines={['바로 가기에', '고정']} />
          <Big w={40} off icon={<Tall w={26} h={30}><PaperStack /></Tall>} lines={['복사']} />
          <Big w={53} off icon={<Tall w={22} h={30}><PasteIcon /></Tall>} lines={['붙여넣기']} />
          <SmallButtons $left={4}>
            <Small off icon={<CutIcon />} text="잘라내기" />
            <Small off icon={<PathIcon />} text="경로 복사" />
            <Small off icon={<PasteLink />} text="바로 가기 붙여넣기" />
          </SmallButtons>
        </GroupBody>
        <GroupName>클립보드</GroupName>
      </Group>
      <Group $w={187}>
        <GroupBody>
          <Big w={42} off icon={<Tall w={32} h={32}><MoveIcon /></Tall>} lines={['이동', '위치']} caret />
          <Big w={42} off icon={<Tall w={32} h={32}><MoveIcon copy /></Tall>} lines={['복사', '위치']} caret />
          <InnerDivider />
          <Big w={42} icon={<Tall w={28} h={32}><DeleteIcon /></Tall>} lines={['삭제', '']} caret />
          <Big w={44} off icon={<Tall w={30} h={32}><RenameIcon /></Tall>} lines={['이름', '바꾸기']} />
        </GroupBody>
        <GroupName>구성</GroupName>
      </Group>
      <Group $w={141}>
        <GroupBody>
          <Big w={40} icon={<Tall w={20} h={29}><OpenFolder w={20} h={28} /></Tall>} lines={['새', '폴더']} />
          <SmallButtons $left={5}>
            <Small icon={<NewItemIcon />} text="새 항목" caret />
            <Small icon={<QuickLinkIcon />} text="빠른 연결" caret />
          </SmallButtons>
        </GroupBody>
        <GroupName>새로 만들기</GroupName>
      </Group>
      <Group $w={127}>
        <GroupBody>
          <Big w={42} icon={<Tall w={22} h={29}><Props s={22} /></Tall>} lines={['속성', '']} caret />
          <SmallButtons $left={4} $gap={7}>
            <Small off icon={<OpenIcon />} text="열기" caret />
            <Small off icon={<EditIcon />} text="편집" />
            <Small icon={<HistoryIcon />} text="히스토리" />
          </SmallButtons>
        </GroupBody>
        <GroupName>열기</GroupName>
      </Group>
      <Group $w={117}>
        <GroupBody>
          <SmallButtons $left={3}>
            <Small icon={<SelectIcon on={[0, 1, 2, 3]} />} text="모두 선택" />
            <Small icon={<SelectIcon on={[]} />} text="선택 안 함" />
            <Small icon={<SelectIcon on={[1, 2]} />} text="선택 영역 반전" />
          </SmallButtons>
        </GroupBody>
        <GroupName>선택</GroupName>
      </Group>
    </Ribbon>
    <AddressRow>
      <NavButtons>
        <NavButton $w={30} aria-label="뒤로"><Arrow d="left" /></NavButton>
        <NavButton $w={30} aria-label="앞으로"><Arrow d="right" c="#d5d5d5" /></NavButton>
        <NavButton $w={16} aria-label="최근 위치"><Chevron dir="down" w={6} c="#888" t={1.5} /></NavButton>
        <NavButton $w={26} aria-label="위로"><Arrow d="up" /></NavButton>
      </NavButtons>
      <AddressBox>
        <Crumbs>
          <Folder />
          {['내 PC', '로컬 디스크 (C:)'].map(c => <Crumb key={c} $hangul><Chevron dir="right" />{c}</Crumb>)}
          {['dev', 'libs'].map(c => <Crumb key={c}><Chevron dir="right" />{c}</Crumb>)}
          <MarkedCrumbs>
            {['cos-26Dec2008', 'lib'].map(c => <Crumb key={c}><Chevron dir="right" />{c}</Crumb>)}
          </MarkedCrumbs>
        </Crumbs>
        <NavButton $w={20} aria-label="이전 위치"><Chevron dir="down" /></NavButton>
        <NavButton $w={14} aria-label="새로고침"><Refresh /></NavButton>
      </AddressBox>
      <SearchBox>
        <input aria-label="lib 검색" placeholder="lib 검색" />
        <Magnifier s={12} />
      </SearchBox>
    </AddressRow>
    <Body>
      <NavPane>
        <Tree>
          {tree.map((branch, b) => (
            <ul key={b}>
              {branch.map((n, i) => (
                <TreeItem key={i}>
                  <TreeRow $root={n.root} $selected={n.sel} $latin={n.latin}>{n.icon}<span>{n.text}</span>{n.pin && <Pin />}</TreeRow>
                </TreeItem>
              ))}
            </ul>
          ))}
        </Tree>
        <TreeScroll>
          <Chevron dir="up" c="#505050" />
          <TreeThumb />
          <Chevron dir="down" c="#505050" />
        </TreeScroll>
      </NavPane>
      <FileList>
        <FileTable>
          <colgroup><NameCol /><DateCol /><TypeCol /><SizeCol /></colgroup>
          <thead><tr><th>이름<Chevron dir="up" w={7} c="#666" t={1} /></th><th>수정한 날짜</th><th>유형</th><th>크기</th></tr></thead>
          <tbody>
            <tr>
              <td><FileName><Svg w={16}><path d="M2.5 .5H10.5L13.5 3.5V15.5H2.5Z" fill="#f8f8f8" stroke="#8b8b8b" /><path d="M10.5 .5V3.5H13.5" stroke="#8b8b8b" /></Svg>cos.jar</FileName></td>
              <td>2008-12-26 오후...</td>
              <td>ALZip JAR File</td>
              <td>56KB</td>
            </tr>
          </tbody>
        </FileTable>
        <Note>압축 푼 후 경로를 따라 들어가<br />jar 파일 복사</Note>
      </FileList>
      <Preview>
        <h2>1개 항목</h2>
        <OpenFolder />
      </Preview>
    </Body>
    <StatusBar>
      1개 항목
      <ViewSwitch>
        <ViewButton $on aria-label="자세히"><Svg w={16}><path d="M.5 1.5H4.5V14.5H.5ZM.5 5.5H4.5M.5 10H4.5" fill="#fff" stroke="#999" /><path d="M6 3.5H10M12 3.5H16M6 8H10M12 8H16M6 12.5H10M12 12.5H16" stroke="#777" /></Svg></ViewButton>
        <ViewButton aria-label="큰 아이콘"><PhotoIcon /></ViewButton>
      </ViewSwitch>
    </StatusBar>
  </Explorer>
);

const Downloads = () => (
  <DownloadBar>
    {['cos-26Dec2008.zip', '껍데기3.txt', 'qwe.txt', '������3.txt'].map((n, i) => (
      <Download key={n}>
        {i === 0 ? <ZipFile /> : <TextFile />}
        <DownloadName>{n}</DownloadName>
        <PlainButton aria-label="옵션"><Chevron dir="up" c="#808387" w={9} /></PlainButton>
      </Download>
    ))}
    <ShowAll>전체 보기</ShowAll>
    <PlainButton aria-label="닫기"><Cross s={9} c="#6b6e71" /></PlainButton>
  </DownloadBar>
);

const Bottom = () => (
  <Taskbar>
    <TaskButton aria-label="시작"><Svg w={16}><path d="M0 2.5L7 1.5V7.5H0ZM8 1.3L16 0V7.5H8ZM0 8.5H7V14.5L0 13.5ZM8 8.5H16V16L8 14.8Z" fill="#fff" /></Svg></TaskButton>
    <TaskButton aria-label="검색"><Magnifier s={18} c="#fff" t={1.1} /></TaskButton>
    <TaskButton aria-label="작업 보기"><Svg w={16}><path d="M.5 0V2.5H11.5V0M.5 5H11.5V11.5H.5ZM.5 16V14H11.5V16M14.5 0V3.5M14.5 8V16M13 5.5H16" stroke="#fff" /></Svg></TaskButton>
    <TaskApps>
      <TaskButton $app $open aria-label="Chrome">
        <Svg w={24}><circle cx={12} cy={12} r={11} fill="#fbc116" /><path d="M2.5 6.5A11 11 0 0 1 21.5 6.5H12L7 15Z" fill="#e33b2e" /><path d="M2.5 6.5A11 11 0 0 0 11.5 23L17 14.5L7.5 14.5Z" fill="#2da94f" /><circle cx={12} cy={12} r={5.3} fill="#fff" /><circle cx={12} cy={12} r={4.2} fill="#4a8af4" /></Svg>
      </TaskButton>
      <TaskButton $app aria-label="메모장">
        <Svg w={24}><path d="M8 2H20L23 20L17 23L2 18Z" fill="#d8e6ea" /><path d="M8 3H19L14 20L2 17Z" fill="#63b0c9" /><path d="M9 3L19 3L17 10L5 12Z" fill="#9ed6e5" /><path d="M20 3L22.5 20L17 22Z" fill="#a8a59c" /></Svg>
      </TaskButton>
      <TaskButton $app aria-label="계산기">
        <Svg w={18} h={24}><path d="M0 0H18V24H0Z" fill="#fff" /><path d="M3 3H15V6H3Z" fill="#22282a" /><path d="M3 10.5H15M3 14.5H15M3 18.5H15" stroke="#22282a" strokeWidth={2} strokeDasharray="2.5 2.2" /></Svg>
      </TaskButton>
      <TaskButton $app $open aria-label="Evernote"><Svg w={24}><circle cx={12} cy={12} r={11.2} fill="#fff" /><g transform="translate(5.5 4.5) scale(.75)"><path d={elephant} fill="#07ab31" fillRule="evenodd" /></g></Svg></TaskButton>
      <TaskButton $app $open aria-label="Java EE IDE">
        <Svg w={24}><path d="M0 0H24V24H0Z" fill="#4b3c78" /><circle cx={12} cy={12} r={9.5} stroke="#d9d5e2" strokeWidth={2.5} strokeDasharray="3 2" /><circle cx={12} cy={12} r={8} fill="#33224f" stroke="#cfc9dc" />
          <text x={12} y={11} fontSize={6} fontWeight="bold" fontFamily="Liberation Sans" textAnchor="middle" fill="#ef7b1a">Java EE</text><text x={12} y={18} fontSize={8} fontWeight="bold" fontFamily="Liberation Sans" textAnchor="middle" fill="#ef7b1a">IDE</text></Svg>
      </TaskButton>
      <TaskButton $app $open aria-label="Internet Explorer">
        <Svg w={24}><path d="M19.5 16.5A7.6 7.6 0 1 1 20.3 12.8H7.5" stroke="#4fb9ef" strokeWidth={4} /><path d="M3 22C-1 18 9 3 19 1.5C23 1 23.5 4 22 7C21 2 9 9 6 15C4 19 4 21 7 20.5C5.5 22 4 22.5 3 22Z" fill="#f8c729" /></Svg>
      </TaskButton>
      <TaskButton $app $open aria-label="Illustrator">
        <Svg w={22}><path d="M1 1H21V21H1Z" fill="#261300" stroke="#f77f00" strokeWidth={1.6} /><text x={11} y={15} fontSize={12} fontWeight="bold" fontFamily="Liberation Sans" textAnchor="middle" fill="#f77f00">Ai</text></Svg>
      </TaskButton>
      <TaskButton $app $open $active aria-label="파일 탐색기">
        <Svg w={22} h={20}><path d="M0 1H7L9 3H21V19H0Z" fill="#ffe18b" /><path d="M1 1.5H6" stroke="#e5a922" /><path d="M4 19V11H17V19H13V15H8V19Z" fill="#38aee3" /></Svg>
      </TaskButton>
      <TaskButton $app $open aria-label="카드 게임">
        <Svg w={24} h={22}><path d="M0 4L3 2.5L8 18L6.5 19Z M4 2L6.5 1.5L10 19L8.5 18.5Z M7.5 1L10.5 .5L11.5 18Z" fill="#fff" /><path d="M11.5 .5L23.5 4L21 21.5L11 19.5Z" fill="#fff" stroke="#22282a" strokeWidth={.8} /><path d="M17 7.5C20.5 10.5 20.5 13.5 17.5 13L18 15.5H15L16 13C13.5 13.5 13.5 10.5 17 7.5Z" fill="#22282a" /></Svg>
      </TaskButton>
    </TaskApps>
    <Tray>
      <TrayPeople aria-label="피플"><Svg w={16}><circle cx={10.5} cy={3.5} r={2.6} stroke="#fff" strokeWidth={1.2} /><circle cx={5} cy={8} r={2.4} stroke="#fff" strokeWidth={1.2} /><path d="M1 15C1 10 9 10 9 15M8 7.5C10 6 14.5 7 14.5 11" stroke="#fff" strokeWidth={1.2} /></Svg></TrayPeople>
      <PlainButton aria-label="숨겨진 아이콘"><Chevron dir="up" c="#fff" w={11} t={1.3} /></PlainButton>
      <PlainButton aria-label="네트워크"><Svg w={17} h={15}><path d="M4 2.5H16.5V10.5H4.5V6M10.5 10.5V13.5M7 13.5H14M.5 1.5H4.5V5.5H.5ZM2.5 5.5V13" stroke="#fff" strokeWidth={1.2} /></Svg></PlainButton>
      <PlainButton aria-label="음소거"><Svg w={16}><path d="M.5 5.5H3L6.5 1.5V13.5L3 9.5H.5Z" stroke="#fff" strokeWidth={1.2} /><circle cx={11.5} cy={11} r={4.5} fill="#e1262d" /><path d="M9.8 9.3L13.2 12.7M13.2 9.3L9.8 12.7" stroke="#fff" strokeWidth={1.3} /></Svg></PlainButton>
      <ImeMark aria-label="입력기">A</ImeMark>
      <Clock>오전 9:34<br />2019-03-20</Clock>
      <Notices aria-label="알림">
        <Svg w={26} h={28}><path d="M2 4H17V16H14V20L9 16H2Z" fill="#fff" /><path d="M4 7.5H15M4 10.5H15M4 13H12" stroke="#2a2b2a" /><circle cx={17} cy={19} r={7.5} fill="#2c2d2d" stroke="#8c8c8c" /><text x={17} y={23} fontSize={12} fontFamily="Noto Sans" textAnchor="middle" fill="#fff">3</text></Svg>
      </Notices>
      <DesktopEdge />
    </Tray>
  </Taskbar>
);

export default function App() {
  return (
    <Screen>
      <GlobalStyle />
      <Browser />
      <WebPage />
      <Downloads />
      <Bottom />
      <ExplorerWindow />
    </Screen>
  );
}
